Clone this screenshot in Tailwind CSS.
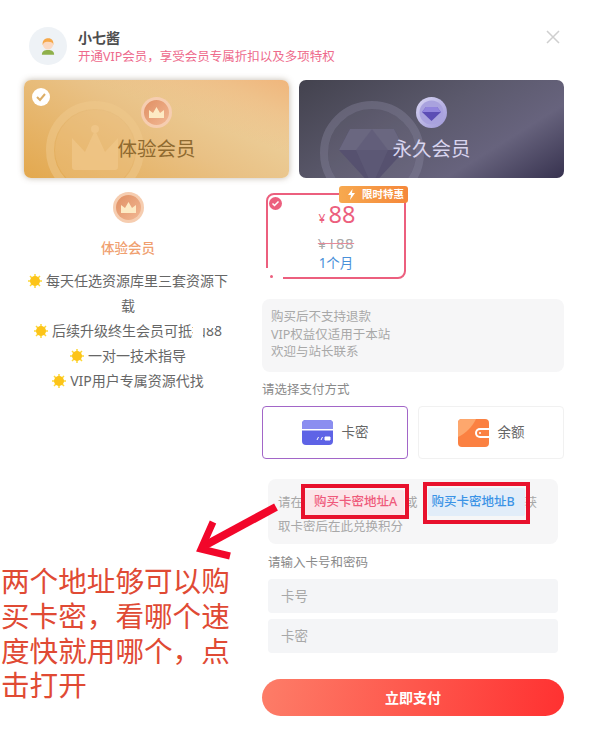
<!DOCTYPE html>
<html lang="zh">
<head>
<meta charset="utf-8">
<script src="https://cdn.jsdelivr.net/npm/@tailwindcss/browser@4"></script>
</head>
<body class="bg-white">
<div class="relative w-[593px] h-[744px] overflow-hidden bg-white font-['Noto_Sans','Noto_Sans_CJK_SC',sans-serif] text-[#555]">

  <!-- header -->
  <div class="flex items-center h-[38px] mt-[27px] ml-[29px]">
    <div class="w-[38px] h-[38px] rounded-full bg-[#eef2f6] flex items-center justify-center">
      <svg width="14" height="18" viewBox="0 0 16 20"><path d="M1 20c0-4 3-5.500 7-5.500s7 1.500 7 5.500z" fill="#8fb04a"/><circle cx="8" cy="8" r="6" fill="#fbd9c2"/><path d="M2 9C1 3 5 1 8.500 1S15 4 14 9c0-3-2-4-6-4S3 6 2 9z" fill="#f6a94b"/></svg>
    </div>
    <div class="ml-[11px] flex flex-col">
      <div class="text-[14px] leading-[20px] font-bold text-[#4d4d4d]">小七酱</div>
      <div class="text-[12.500px] leading-[17px] text-[#ee6a8c]">开通VIP会员，享受会员专属折扣以及多项特权</div>
    </div>
    <svg class="ml-auto mr-[33px] self-start mt-[3px]" width="14" height="14" viewBox="0 0 14 14"><path d="M1 1l12 12M13 1L1 13" stroke="#cfcfcf" stroke-width="1.500" fill="none"/></svg>
  </div>

  <!-- plan cards -->
  <div class="flex gap-[10px] mx-[24px] mt-[15px] w-[540px]">
    <div class="relative flex-1 h-[98px] rounded-[7px] overflow-hidden shadow-[0_0_6px_rgba(120,100,70,0.45)] bg-[linear-gradient(200deg,#f0b67c_0%,rgba(240,182,124,0)_38%),linear-gradient(30deg,#e3a84e_0%,#e9c185_50%,#edd29f_85%)] flex flex-col items-center">
      <svg class="absolute left-[21px] top-[20px]" width="100" height="100" viewBox="0 0 100 100" fill="none"><circle cx="50" cy="50" r="40" fill="#edc385" fill-opacity=".35"/><circle cx="50" cy="50" r="45" stroke="#efc88d" stroke-opacity=".55" stroke-width="8"/><path d="M27 38l13 14 10-22 10 22 13-14v29a3 3 0 01-3 3H30a3 3 0 01-3-3z" fill="#efc587" fill-opacity=".8"/><circle cx="50" cy="29" r="4" fill="#efc587"/></svg>
      <div class="absolute left-[8px] top-[8px] w-[18px] h-[18px] rounded-full bg-white flex items-center justify-center">
        <svg width="12" height="12" viewBox="0 0 12 12"><path d="M2 6l3 3 5-6" stroke="#dcae68" stroke-width="2" fill="none"/></svg>
      </div>
      <svg class="relative mt-[17px]" width="31" height="31" viewBox="0 0 31 31"><defs><linearGradient id="m1" x1="0" y1="0" x2="1" y2="1"><stop offset="0" stop-color="#e08f63"/><stop offset="1" stop-color="#f2b894"/></linearGradient></defs><circle cx="15.500" cy="15.500" r="15.500" fill="#f6cdb0"/><circle cx="15.500" cy="15.500" r="12.500" fill="url(#m1)"/><path d="M8 21v-8l4 3 3.500-6 3.500 6 4-3v8z" fill="#fdeac4"/></svg>
      <div class="relative mt-[6px] text-[19.500px] leading-[30px] text-[#8f6a30]">体验会员</div>
    </div>
    <div class="relative flex-1 h-[98px] rounded-[7px] overflow-hidden bg-[linear-gradient(148deg,#43424e_0%,#5b596c_45%,#67637d_72%,#37324f_100%)] flex flex-col items-center">
      <svg class="absolute left-[20px] top-[20px]" width="106" height="106" viewBox="0 0 106 106" fill="none"><circle cx="53" cy="53" r="44" fill="#8a87a0" fill-opacity=".15"/><circle cx="53" cy="53" r="48" stroke="#8a87a0" stroke-opacity=".4" stroke-width="8"/><path d="M31 29h44l11 21-33 36-33-36z" fill="#56516f"/><path d="M31 29h44l11 21H20z" fill="#6a6780"/><path d="M53 29l-16 21 16 36 16-36z" fill="#5f5b78" fill-opacity=".7"/></svg>
      <svg class="relative mt-[17px]" width="31" height="31" viewBox="0 0 31 31"><defs><linearGradient id="m2" x1="0" y1="0" x2="1" y2="1"><stop offset="0" stop-color="#d9d6f4"/><stop offset="1" stop-color="#9d96d6"/></linearGradient></defs><circle cx="15.500" cy="15.500" r="15.500" fill="url(#m2)"/><circle cx="15.500" cy="15.500" r="12" fill="#a9a2de"/><path d="M10 10h11l4 5-9.500 9L6 15z" fill="#5c4db5"/><path d="M10 10h11l4 5H6z" fill="#9184dd"/></svg>
      <div class="relative mt-[6px] text-[19.500px] leading-[30px] text-[#d8d4ee]">永久会员</div>
    </div>
  </div>

  <!-- body -->
  <div class="flex mt-[14px]">
    <!-- left -->
    <div class="ml-[24px] w-[208px] flex flex-col items-center text-center">
      <svg width="31" height="31" viewBox="0 0 31 31"><defs><linearGradient id="m3" x1="0" y1="0" x2="1" y2="1"><stop offset="0" stop-color="#e08f63"/><stop offset="1" stop-color="#f2b894"/></linearGradient></defs><circle cx="15.500" cy="15.500" r="15.500" fill="#f6cdb0"/><circle cx="15.500" cy="15.500" r="12.500" fill="url(#m3)"/><path d="M8 21v-8l4 3 3.500-6 3.500 6 4-3v8z" fill="#fdeac4"/></svg>
      <div class="mt-[15px] text-[13.500px] leading-[20px] font-medium text-[#f0a070]">体验会员</div>
      <ul class="mt-[10px] w-full text-[14px] leading-[25px] text-[#666]">
        <li><svg class="inline-block mr-[4px] -mt-[3px]" width="14" height="14" viewBox="0 0 14 14"><path d="M7 0v14M0 7h14M2 2l10 10M12 2L2 12" stroke="#fdd835" stroke-width="1.500"/><circle cx="7" cy="7" r="5" fill="#fcc419"/></svg>每天任选资源库里三套资源下载</li>
        <li><svg class="inline-block mr-[4px] -mt-[3px]" width="14" height="14" viewBox="0 0 14 14"><path d="M7 0v14M0 7h14M2 2l10 10M12 2L2 12" stroke="#fdd835" stroke-width="1.500"/><circle cx="7" cy="7" r="5" fill="#fcc419"/></svg>后续升级终生会员可抵扣88</li>
        <li><svg class="inline-block mr-[4px] -mt-[3px]" width="14" height="14" viewBox="0 0 14 14"><path d="M7 0v14M0 7h14M2 2l10 10M12 2L2 12" stroke="#fdd835" stroke-width="1.500"/><circle cx="7" cy="7" r="5" fill="#fcc419"/></svg>一对一技术指导</li>
        <li><svg class="inline-block mr-[4px] -mt-[3px]" width="14" height="14" viewBox="0 0 14 14"><path d="M7 0v14M0 7h14M2 2l10 10M12 2L2 12" stroke="#fdd835" stroke-width="1.500"/><circle cx="7" cy="7" r="5" fill="#fcc419"/></svg>VIP用户专属资源代找</li>
      </ul>
    </div>

    <!-- right -->
    <div class="ml-[30px] w-[302px] flex flex-col">
      <div class="relative ml-[4px] mt-[1px] w-[140px] h-[86px] rounded-[8px] border-2 border-[#ec5f7e] flex flex-col items-center">
        <div class="absolute left-[71px] -top-[9px] w-[69px] h-[17px] rounded-[3px] bg-[linear-gradient(90deg,#f7a94f,#f5873a)] flex items-center pl-[9px] gap-[7px] text-[10.500px] font-bold text-white whitespace-nowrap">
          <svg width="7" height="11" viewBox="0 0 7 11"><path d="M4.500 0L0 6h3L2 11l5-7H4z" fill="#fff"/></svg>限时特惠
        </div>
        <div class="absolute left-[1px] top-[2px] w-[13px] h-[13px] rounded-full bg-[#ec5f7e] flex items-center justify-center">
          <svg width="9" height="9" viewBox="0 0 9 9"><path d="M1.500 4.500l2 2 4-4" stroke="#fff" stroke-width="1.500" fill="none"/></svg>
        </div>
        <div class="ml-[2px] mt-[4px] h-[30px] leading-[30px] text-[#ec5f7e] flex items-baseline"><span class="text-[12px] mr-[3px]">¥</span><span class="text-[23.500px]">88</span></div>
        <div class="mt-[3px] h-[22px] leading-[22px] text-[15px] tracking-[0.5px] text-[#a8a8a8] line-through decoration-[#e58a9a]">¥188</div>
        <div class="-mt-[1px] h-[20px] leading-[20px] text-[13.500px] text-[#4a90d9]">1个月</div>
        <div class="absolute -left-[2px] -bottom-[2px] w-[17px] h-[11px] bg-white"></div>
        <div class="absolute left-[2px] -bottom-[1px] w-[3px] h-[3px] rounded-full bg-[#ec5f7e]"></div>
      </div>

      <div class="mt-[20px] h-[73px] rounded-[8px] bg-[#f6f6f7] px-[9px] py-[9px] text-[12.500px] leading-[17.500px] text-[#a8a8a8]">
        <div>购买后不支持退款</div>
        <div>VIP权益仅适用于本站</div>
        <div>欢迎与站长联系</div>
      </div>

      <div class="mt-[8px] h-[20px] leading-[20px] text-[12.500px] text-[#8a8a8a]">请选择支付方式</div>

      <div class="flex gap-[10px] mt-[6px]">
        <div class="w-[146px] h-[53px] rounded-[4px] border border-[#a266c8] flex items-center justify-center gap-[9px] text-[13.500px] text-[#666]">
          <svg width="31" height="25" viewBox="0 0 31 25"><rect width="31" height="25" rx="4" fill="#5e63e6"/><path d="M0 4a4 4 0 014-4h23a4 4 0 014 4v5H0z" fill="#8b8ef0"/><path d="M0 9h31v1.500H0z" fill="#fff"/><path d="M15 20l1.500-3M19 20l1.500-3M23 17h5v3h-5z" stroke="#fff" stroke-width="1" fill="#fff"/></svg>
          卡密
        </div>
        <div class="w-[146px] h-[53px] rounded-[4px] border border-[#f1f1f1] flex items-center justify-center gap-[9px] text-[13.500px] text-[#666]">
          <svg width="31" height="28" viewBox="0 0 31 28"><rect width="31" height="28" rx="4" fill="#fb8142"/><path d="M0 4a4 4 0 014-4h14C14 8 8 14 0 18z" fill="#fda76d"/><path d="M31 9h-9a5 5 0 000 10h9" fill="#fff"/><path d="M31 11h-9a3 3 0 000 6h9z" fill="#fb8142"/><circle cx="22" cy="14" r="1" fill="#fff"/></svg>
          余额
        </div>
      </div>

      <div class="mx-[6px] mt-[20px] h-[65px] rounded-[8px] bg-[#f6f6f7] pl-[10px] pr-[6px] pt-[9px] text-[12.500px] leading-[23px] text-[#a8a8a8] w-[290px]">
        <div class="whitespace-nowrap flex items-center h-[28px]">请在<span class="ml-[1px] pl-[10px] pr-[6px] w-[100px] h-[25px] leading-[24px] rounded-[2px] bg-[#fce4e8] text-[#ef5a7b] font-medium">购买卡密地址A</span><span class="ml-[1px]">或</span><span class="ml-[10px] px-[4px] w-[97px] h-[28px] leading-[27px] rounded-[2px] bg-[#e2edf9] text-[#3b93e6] font-medium whitespace-nowrap">购买卡密地址B</span>获</div>
        <div class="whitespace-nowrap -mt-[1px]">取卡密后在此兑换积分</div>
      </div>

      <div class="mx-[6px] mt-[9px] h-[20px] leading-[20px] text-[12.500px] text-[#8a8a8a]">请输入卡号和密码</div>
      <div class="mx-[6px] mt-[6px] h-[34px] w-[290px] rounded-[4px] bg-[#f4f5f7] pl-[13px] leading-[34px] text-[13.500px] text-[#a8a8a8]">卡号</div>
      <div class="mx-[6px] mt-[6px] h-[34px] w-[290px] rounded-[4px] bg-[#f4f5f7] pl-[13px] leading-[34px] text-[13.500px] text-[#a8a8a8]">卡密</div>

      <div class="mt-[26px] h-[37px] rounded-full bg-[linear-gradient(100deg,#fd7d68_0%,#ff3131_100%)] text-center leading-[37px] text-[14px] font-bold text-white">立即支付</div>
    </div>
  </div>

  <!-- overlaid screenshot annotations -->
  <div class="absolute left-[301px] top-[484px] w-[108px] h-[35px] border-[4px] border-[#e8112d]"></div>
  <div class="absolute left-[423px] top-[482px] w-[107px] h-[42px] border-[4px] border-[#e8112d]"></div>
  <svg class="absolute left-[190px] top-[500px]" width="95" height="65" viewBox="0 0 95 65" fill="none"><path d="M86 7L12 47" stroke="#f2072a" stroke-width="8"/><path d="M23 22L11 49l29 7" stroke="#f2072a" stroke-width="7"/></svg>
  <div class="absolute left-[1px] top-[564px] w-[231px] text-[28.600px] leading-[34.800px] text-[#e04a34]">两个地址够可以购买卡密，看哪个速度快就用哪个，点击打开</div>

  <!-- erased specks in the picture -->
  <div class="absolute left-[193px] top-[322px] w-[7px] h-[18px] bg-white"></div>
  <div class="absolute left-[200px] top-[322px] w-[16px] h-[6px] bg-white"></div>
  <div class="absolute left-[200px] top-[328px] w-[3px] h-[12px] bg-white"></div>
  <div class="absolute left-[331px] top-[226px] w-[6px] h-[5px] bg-white"></div>
  <div class="absolute left-[322px] top-[238px] w-[9px] h-[4px] bg-white"></div>
</div>
</body>
</html>
